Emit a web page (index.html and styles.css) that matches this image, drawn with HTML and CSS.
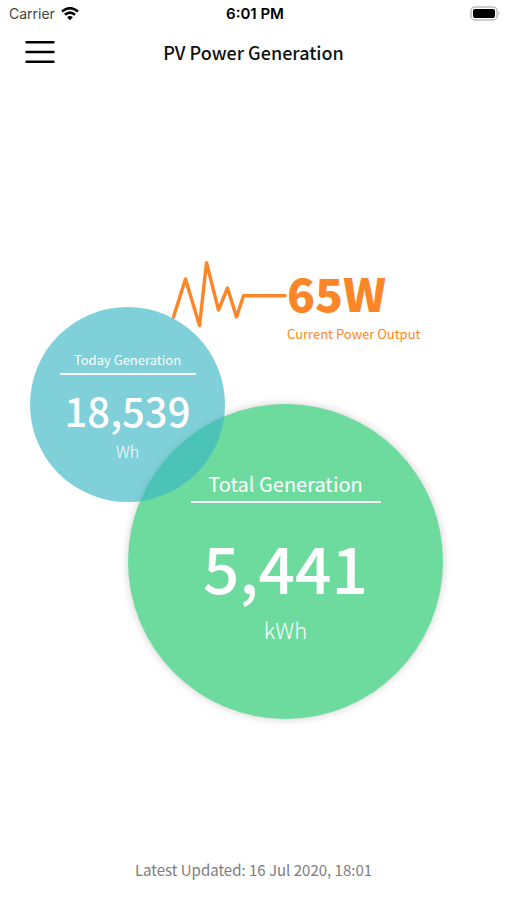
FILE: index.html
```html
<!DOCTYPE html>
<html lang="en">
<head>
<meta charset="utf-8">
<meta name="viewport" content="width=device-width, initial-scale=1">
<title>PV Power Generation</title>
<link rel="stylesheet" href="styles.css">
</head>
<body>
<div class="status">
  <div class="carrier">
    <span>Carrier</span>
    <svg width="18" height="14" viewBox="0 0 18 14" fill="none" stroke="#000" stroke-width="2.6" aria-hidden="true">
      <path d="M1 4.6Q9-2.2 17 4.6"/>
      <path d="M3.9 7.8Q9 3.4 14.1 7.8"/>
      <path d="M9 13.2 6.1 10.3Q9 7.9 11.9 10.3Z" fill="#000" stroke="none"/>
    </svg>
  </div>
  <time class="clock">6:01 PM</time>
  <svg class="battery" width="31" height="16" viewBox="0 0 31 16" aria-hidden="true">
    <rect x="1" y="1" width="26" height="13" rx="4" fill="#fff" stroke="#bdbdbd" stroke-width="1.5"/>
    <rect x="3" y="3" width="22" height="9" rx="2" fill="#000"/>
    <path d="M28.5 5.3Q31 7.5 28.5 9.7Z" fill="#bdbdbd"/>
  </svg>
</div>
<header class="bar">
  <button class="menu" type="button" aria-label="Menu">
    <svg width="30" height="24" viewBox="0 0 30 24" stroke="#000" stroke-width="2.4" stroke-linecap="round" aria-hidden="true">
      <path d="M1.5 2.2H28.5M1.5 12H28.5M1.5 21.7H28.5"/>
    </svg>
  </button>
  <h1 class="title">PV Power Generation</h1>
</header>
<main class="stage">
  <section class="current">
    <svg width="115" height="70" viewBox="0 0 115 70" fill="none" stroke="#fb8627" stroke-width="3.4" stroke-linejoin="round" stroke-linecap="round" aria-hidden="true">
      <path d="M1.5 57 13.5 19 27.5 65.5 34.5 2.7 46.5 50 55.5 28 64.5 57 71.5 35.7H113"/>
    </svg>
    <div class="output">
      <strong class="watts">65W</strong>
      <span class="caption">Current Power Output</span>
    </div>
  </section>
  <section class="disc today">
    <h2 class="label">Today Generation</h2>
    <p class="amount">18,539</p>
    <p class="unit">Wh</p>
  </section>
  <section class="disc total">
    <h2 class="label">Total Generation</h2>
    <p class="amount">5,441</p>
    <p class="unit">kWh</p>
  </section>
</main>
<footer class="updated">Latest Updated: 16 Jul 2020, 18:01</footer>
</body>
</html>
```
FILE: styles.css
```css
* {
  box-sizing: border-box;
}

body {
  margin: 0;
  min-height: 100vh;
  display: flex;
  flex-direction: column;
  background: #fff;
  color: #111;
  font-family: "Noto Sans CJK SC", "Noto Sans", sans-serif;
}

h1,
h2,
p {
  margin: 0;
}

.status {
  display: grid;
  grid-template-columns: 1fr auto 1fr;
  align-items: center;
  height: 28px;
  padding: 0 6px 0 9px;
  font: 14px/20px Inter, "Liberation Sans", sans-serif;
}

.carrier {
  display: flex;
  align-items: center;
  gap: 6px;
  color: #444;
}

.clock {
  color: #000;
  font-size: 15px;
  font-weight: 600;
}

.battery {
  justify-self: end;
}

.bar {
  display: grid;
  grid-template-columns: 30px 1fr 30px;
  align-items: center;
  height: 48px;
  padding: 0 25px;
}

.menu {
  display: flex;
  padding: 0;
  border: 0;
  background: none;
}

.title {
  font-size: 18px;
  line-height: 28px;
  font-weight: 500;
  text-align: center;
}

.stage {
  padding: 184px 0 24px 30px;
}

.current {
  display: flex;
  margin-left: 142px;
  color: #fb8627;
}

.output {
  display: flex;
  flex-direction: column;
}

.watts {
  font-size: 46px;
  line-height: 64px;
  font-weight: 900;
}

.caption {
  font-size: 13px;
  line-height: 20px;
}

.disc {
  display: flex;
  flex-direction: column;
  align-items: center;
  border-radius: 50%;
  color: #fff;
}

.label {
  padding-bottom: 2px;
  border-bottom: 2px solid #fff;
  font-weight: 400;
  text-align: center;
}

.amount {
  font-weight: 500;
}

.unit {
  font-weight: 300;
}

.today {
  position: relative;
  z-index: 1;
  width: 195px;
  height: 195px;
  margin-top: -37px;
  padding-top: 42px;
  background: rgba(58, 183, 197, 0.65);
}

.today .label {
  width: 136px;
  font-size: 13px;
  line-height: 22px;
}

.today .amount {
  margin-top: 6px;
  font-size: 40px;
  line-height: 58px;
}

.today .unit {
  font-size: 16px;
  line-height: 24px;
}

.total {
  width: 315px;
  height: 315px;
  margin: -98px 0 0 98px;
  padding-top: 65px;
  background: #6edb9e;
  box-shadow: 0 0 8px rgba(0, 0, 0, 0.2);
}

.total .label {
  width: 190px;
  font-size: 20px;
  line-height: 30px;
}

.total .amount {
  margin-top: 16px;
  font-size: 64px;
  line-height: 94px;
}

.total .unit {
  font-size: 22px;
  line-height: 32px;
}

.updated {
  margin-top: auto;
  padding-bottom: 18px;
  color: #7d7d7d;
  font-size: 15px;
  line-height: 24px;
  text-align: center;
}
```
